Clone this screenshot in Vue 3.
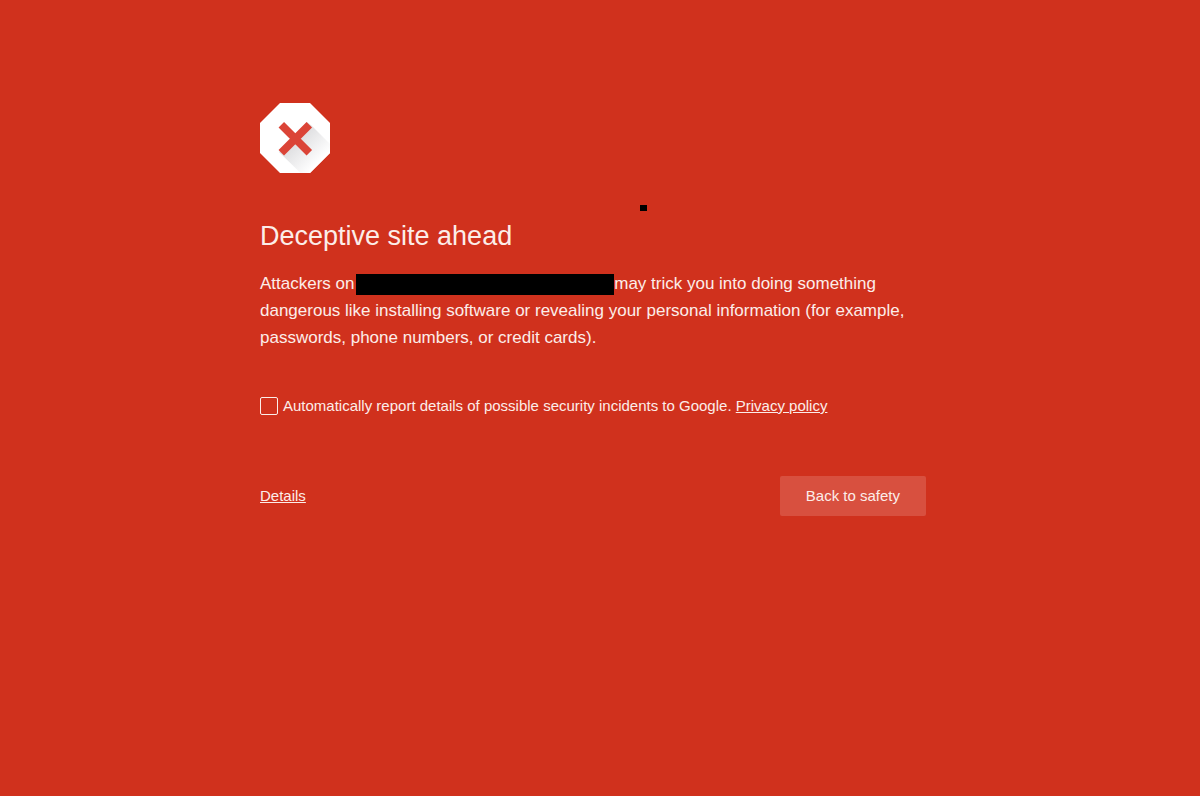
<script setup>
import { ref } from 'vue'

const report = ref(false)
</script>

<template>
  <main class="page">
    <div class="interstitial">
      <svg class="icon" viewBox="0 0 72 72" aria-hidden="true">
        <defs>
          <linearGradient id="shade" gradientUnits="userSpaceOnUse" x1="36" y1="36" x2="60" y2="60">
            <stop offset="0" stop-color="#dcdcde" />
            <stop offset="1" stop-color="#fff" />
          </linearGradient>
          <clipPath id="octagon">
            <path d="M21 1H51L71 21V51L51 71H21L1 51V21Z" />
          </clipPath>
        </defs>
        <path d="M21 1H51L71 21V51L51 71H21L1 51V21Z" fill="#fff" />
        <path
          clip-path="url(#octagon)"
          d="M48 20L53 24L88 59L59 88L20 50L36 36Z"
          fill="url(#shade)"
        />
        <path d="M22.3 22.8L50.3 50.8M50.3 22.8L22.3 50.8" stroke="#db4437" stroke-width="7.8" />
      </svg>
      <span class="speck"></span>
      <h1>Deceptive site ahead</h1>
      <p class="message">
        Attackers on <span class="redacted"></span>may trick you into doing something
        dangerous like installing software or revealing your personal information (for example,
        passwords, phone numbers, or credit cards).
      </p>
      <div class="reporting">
        <input id="report" v-model="report" type="checkbox" />
        <p>
          <label for="report">Automatically report details of possible security incidents to Google.</label>&#32;<a href="#privacy">Privacy policy</a>
        </p>
      </div>
      <div class="actions">
        <a href="#details">Details</a>
        <button type="button">Back to safety</button>
      </div>
    </div>
  </main>
</template>

<style>
body {
  margin: 0;
  background: #d0311d;
}
</style>

<style scoped>
.page {
  box-sizing: border-box;
  min-height: 100vh;
  padding: 102px 14px 40px 0;
  background: #d0311d;
  color: #fcede9;
  font-family: "Liberation Sans", Arial, sans-serif;
  font-size: 15px;
  line-height: 20px;
}

.interstitial {
  position: relative;
  max-width: 666px;
  margin: 0 auto;
}

.icon {
  display: block;
  width: 72px;
  height: 72px;
  margin-left: -1px;
}

.speck {
  position: absolute;
  top: 103px;
  left: 380px;
  width: 7px;
  height: 6px;
  background: #000;
}

h1 {
  margin: 46px 0 18px;
  font-size: 27px;
  font-weight: 400;
  line-height: 32px;
}

.message {
  margin: 0;
  font-size: 17px;
  line-height: 27px;
}

.redacted {
  display: inline-block;
  width: 258px;
  height: 21px;
  margin-left: -3px;
  vertical-align: middle;
  background: #000;
}

.reporting {
  display: flex;
  align-items: center;
  gap: 5px;
  margin-top: 45px;
}

.reporting p {
  margin: 0;
}

.reporting input {
  appearance: none;
  flex: none;
  width: 18px;
  height: 18px;
  margin: 0;
  border: 1px solid #fcede9;
  border-radius: 2px;
}

.reporting input:checked {
  background: #fcede9;
}

a {
  color: inherit;
  text-decoration: underline;
}

.actions {
  display: flex;
  align-items: center;
  justify-content: space-between;
  margin-top: 60px;
}

button {
  padding: 10px 26px;
  border: 0;
  border-radius: 2px;
  background: #d8503f;
  color: inherit;
  font: inherit;
  line-height: 20px;
}
</style>
